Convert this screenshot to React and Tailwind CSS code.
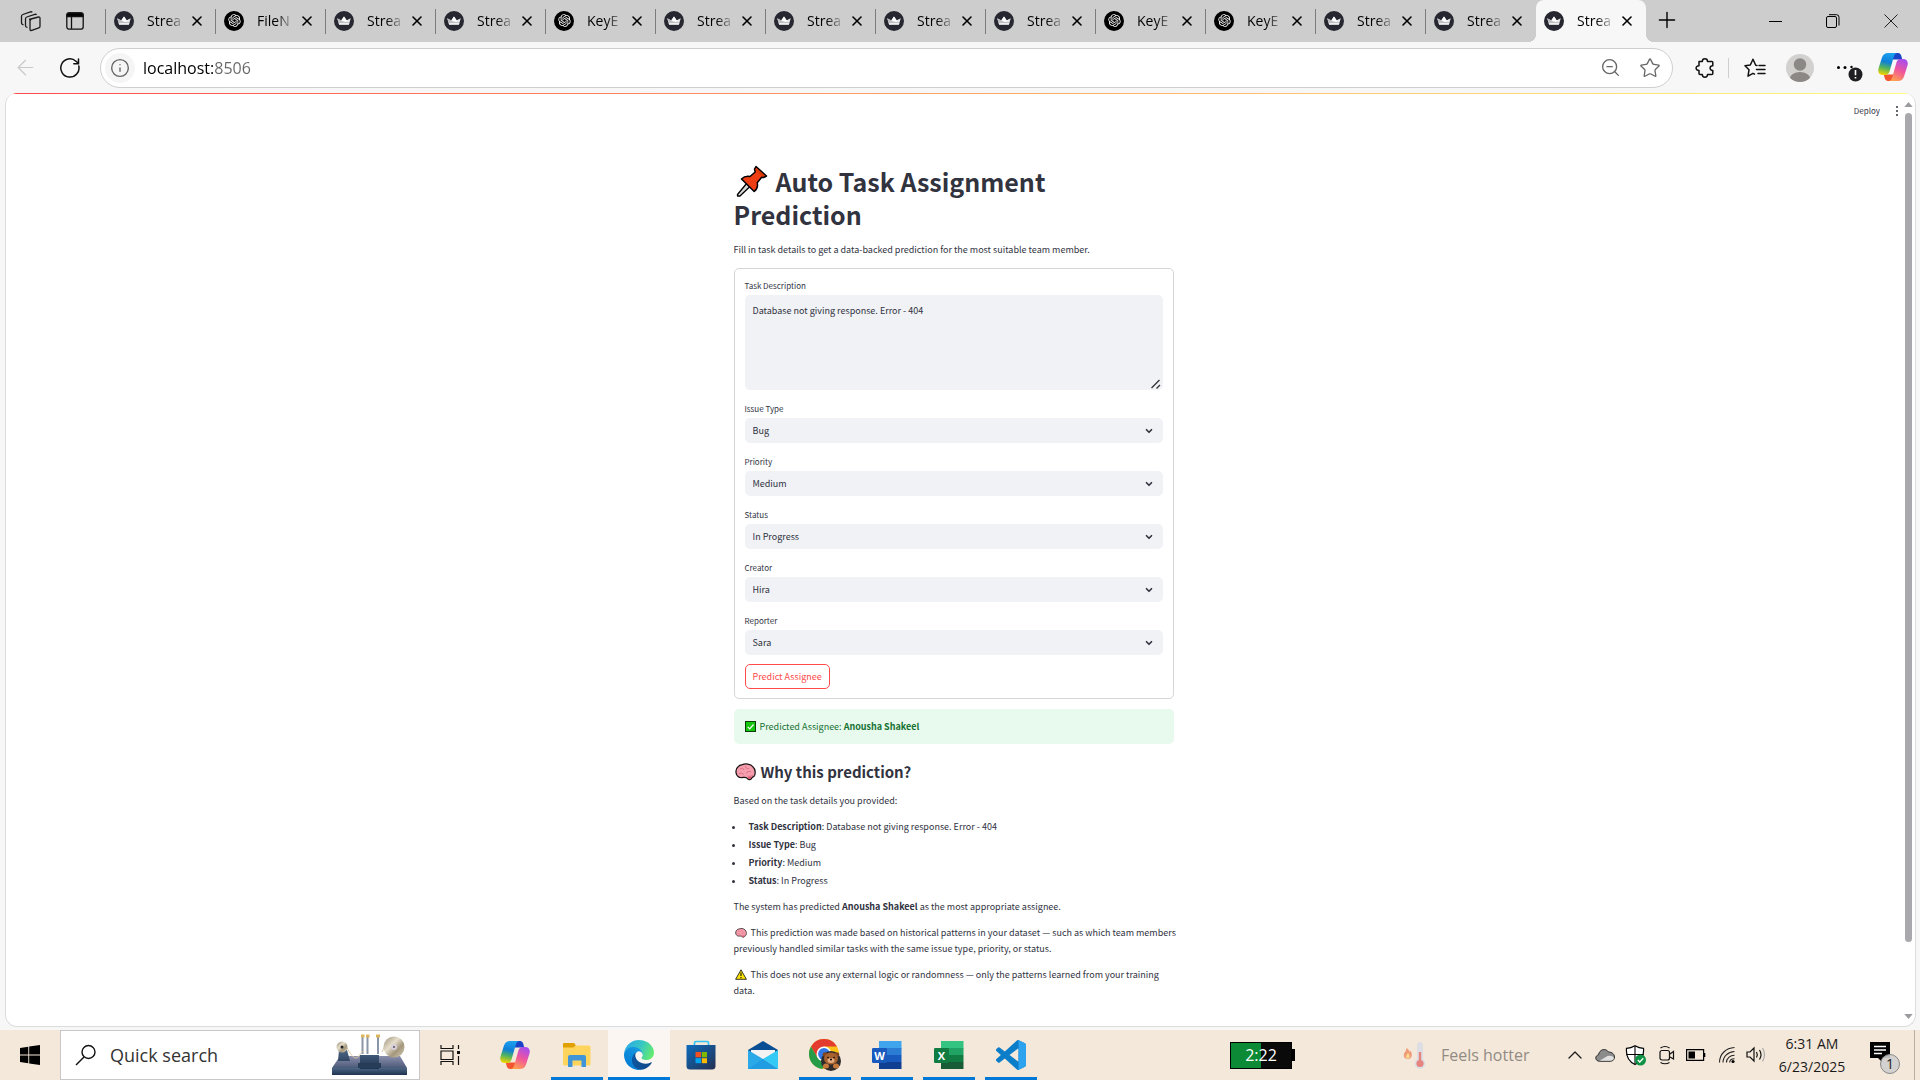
import { useState } from "react";
import { ArrowLeft, Info, X, Plus, ZoomOut, Star, ChevronUp, ChevronDown } from "lucide-react";
import { RiOpenaiFill } from "react-icons/ri";

const TABS = ["s", "o", "s", "s", "o", "s", "s", "s", "s", "o", "o", "s", "s", "s"];
const TAB_TEXT = ["Strea", "FileN", "Strea", "Strea", "KeyE", "Strea", "Strea", "Strea", "Strea", "KeyE", "KeyE", "Strea", "Strea", "Strea"];

function StreamlitIcon() {
  return (
    <svg viewBox="0 0 20 20" className="size-5" aria-hidden="true">
      <circle cx="10" cy="10" r="10" fill="#262730" />
      <path d="M3.2 7.2 7.2 9.5 10 5.6l2.8 3.900 4-2.300-1.900 6.200H5.100z" fill="#e6e6e8" />
      <path d="M10 5.600 7.200 9.500l3.600 2.300 6-4.600-4 2.300z" fill="#fff" />
      <path d="m3.200 7.200 1.900 6.200h9.800l.5-1.800-6-1z" fill="#bdbdc2" />
      <path d="m4.800 12.300.3 1.100h9.800l.3-1.100z" fill="#fff" />
    </svg>
  );
}

function OpenAiIcon() {
  return (
    <span className="flex size-5 items-center justify-center rounded-full bg-black text-white">
      <RiOpenaiFill size={15} />
    </span>
  );
}

function Tab({ kind, title, active }) {
  return (
    <div
      className={
        active
          ? "relative flex h-[42px] w-[110px] shrink-0 items-center rounded-t-lg bg-[#f7f7f7] pl-2"
          : "relative flex h-[42px] w-[110px] shrink-0 items-center pl-2"
      }
    >
      {active ? (
        <>
          <span className="absolute bottom-0 -left-2 size-2 bg-[radial-gradient(circle_at_0_0,#cdcdcd_8px,#f7f7f7_8px)]" />
          <span className="absolute -right-2 bottom-0 size-2 bg-[radial-gradient(circle_at_100%_0,#cdcdcd_8px,#f7f7f7_8px)]" />
        </>
      ) : (
        <span className="absolute top-[9px] -left-px h-[25px] w-px bg-[#7c7c7c]" />
      )}
      <button type="button" className="flex h-10 items-center gap-[13px] pb-px">
        {kind === "s" ? <StreamlitIcon /> : <OpenAiIcon />}
        <span className="w-[38px] text-left text-sm whitespace-nowrap [mask-image:linear-gradient(90deg,#000_50%,transparent)]">
          {title}
        </span>
      </button>
      <button type="button" aria-label="Close tab" className="ml-1 flex size-4 items-center justify-center">
        <X size={16} strokeWidth={1.6} absoluteStrokeWidth className="shrink-0" />
      </button>
    </div>
  );
}

function WorkspacesIcon() {
  return (
    <svg viewBox="0 0 22 22" className="size-[22px]" fill="none" stroke="#1b1b1b" strokeWidth="1.3" strokeLinejoin="round" aria-hidden="true">
      <path d="m9 9.500 9.500-2.500q1.500-.3 1.500 1.200v8q0 1.300-1.200 1.700l-7 2.500q-1.800.5-1.800-1.200V11q0-1.200 1.200-1.700" />
      <path d="M7.500 17.500 6.300 17q-.8-.4-.8-1.500V8.800q0-1.400 1.300-1.800l8-2.700q1.200-.3 1.700.6" />
      <path d="M3.500 15 2.300 14.300q-.8-.4-.8-1.500V6.300q0-1.400 1.300-1.800l7.700-2.700q1.200-.3 1.700.6" />
    </svg>
  );
}

function PaneIcon() {
  return (
    <svg viewBox="0 0 18 18" className="size-[18px]" fill="none" stroke="#111" strokeWidth="1.300" aria-hidden="true">
      <rect x=".8" y=".8" width="16.400" height="16.400" rx="2.500" />
      <path d="M1 4.500V3q0-2 2-2h12q2 0 2 2v1.500z" fill="#000" />
      <path d="M5.500 5v12" />
    </svg>
  );
}

function CopilotIcon() {
  return (
    <svg viewBox="0 0 30 30" className="size-[30px]" aria-hidden="true">
      <defs>
        <linearGradient id="cpA" x1=".5" y1="0" x2=".3" y2="1">
          <stop offset="0" stopColor="#1ba0ee" />
          <stop offset=".4" stopColor="#0f7fd8" />
          <stop offset=".68" stopColor="#52b45c" />
          <stop offset="1" stopColor="#f3d400" />
        </linearGradient>
        <linearGradient id="cpB" x1=".7" y1="0" x2=".3" y2="1">
          <stop offset="0" stopColor="#a64df0" />
          <stop offset=".5" stopColor="#f0569b" />
          <stop offset="1" stopColor="#ffa04f" />
        </linearGradient>
      </defs>
      <path d="M15 1h5c2 0 2.800 1.400 3.300 3l1 3.500H15z" fill="#1a43c8" />
      <path d="M15 29h-5c-2 0-2.800-1.400-3.300-3l-1-3.500H15z" fill="#f2552f" />
      <path d="M10 1h9c-2 .5-2.700 2-3.300 4l-4 14c-.8 2.600-2 4-4.500 4H5c-4 0-5.500-3-4.500-6.500L4 5.500C5 2.500 7 1 10 1z" fill="url(#cpA)" />
      <path d="M20 29h-9c2-.5 2.700-2 3.300-4l4-14c.8-2.600 2-4 4.500-4H25c4 0 5.500 3 4.500 6.500L26 24.500c-1 3-3 4.500-6 4.500z" fill="url(#cpB)" />
    </svg>
  );
}

function PuzzleIcon() {
  return (
    <svg viewBox="0 0 20 20" className="size-5" fill="none" stroke="#111" strokeWidth="1.500" strokeLinejoin="round" aria-hidden="true">
      <path d="M4 3.500h3.300c0-3.600 5.200-3.600 5.200 0h4.300q1 0 1 1v3.200c-3.600-.3-3.600 5 0 4.700v3.200q0 1-1 1h-4.300c0 3.500-5.200 3.500-5.200 0H5q-1 0-1-1v-3.200c-3.900 0-3.900-4.700 0-4.700z" />
    </svg>
  );
}

function FavoritesIcon() {
  return (
    <svg viewBox="0 0 22 20" className="h-5 w-[22px]" fill="none" stroke="#111" strokeWidth="1.500" strokeLinejoin="round" strokeLinecap="round" aria-hidden="true">
      <path d="m13 7.500-1.300-.2L9 1.200 6.300 7 1 7.800l4 4-1 6.400 5-2.900 1.500.8M15 7.500h6M12.500 11.500H21M14 15.500h7" />
    </svg>
  );
}

function BrowserChrome() {
  return (
    <header className="shrink-0">
      <div className="flex h-[42px] items-center bg-[#cdcdcd]">
        <div className="flex w-[106px] shrink-0 items-center gap-6 pl-5">
          <button type="button" aria-label="Workspaces"><WorkspacesIcon /></button>
          <button type="button" aria-label="Tab actions"><PaneIcon /></button>
        </div>
        {TABS.map((kind, i) => (
          <Tab key={i} kind={kind} title={TAB_TEXT[i]} active={i === TABS.length - 1} />
        ))}
        <button type="button" aria-label="New tab" className="ml-2 pb-[3px]">
          <Plus size={26} strokeWidth={1.400} absoluteStrokeWidth />
        </button>
        <div className="ml-auto flex items-center">
          <button type="button" aria-label="Minimize" className="flex w-[58px] justify-center"><span className="h-px w-[13px] bg-black" /></button>
          <button type="button" aria-label="Restore" className="flex w-[58px] justify-center">
            <svg viewBox="0 0 14 14" className="size-[14px]" fill="none" stroke="#000" aria-hidden="true">
              <rect x=".5" y="2.500" width="10" height="11" rx="1.500" />
              <path d="M3 .7h7.500q2.500 0 2.500 2.500V11.500" />
            </svg>
          </button>
          <button type="button" aria-label="Close window" className="flex w-[58px] justify-center">
            <svg viewBox="0 0 14 14" className="size-[14px]" stroke="#222" aria-hidden="true"><path d="m.5.500 13 13m0-13-13 13" /></svg>
          </button>
        </div>
      </div>
      <div className="flex h-[51px] items-center bg-[#f7f7f7] pr-3">
        <div className="flex w-[100px] shrink-0 items-center gap-[22px] pl-[13px]">
          <button type="button" aria-label="Back" className="text-[#c9c9c9]"><ArrowLeft size={25} strokeWidth={1.200} absoluteStrokeWidth /></button>
          <button type="button" aria-label="Refresh">
            <svg viewBox="0 0 20 20" className="size-5" fill="none" stroke="#111" strokeWidth="1.500" strokeLinecap="round" aria-hidden="true">
              <path d="M18.800 8A9.100 9.100 0 1 1 16 3.200L18.500 5.500M18.500 1v4.700h-4.700" />
            </svg>
          </button>
        </div>
        <div className="flex h-10 min-w-0 flex-1 items-center rounded-full border border-[#cfcfcf] bg-white pr-[11px] pl-1">
          <button type="button" aria-label="Site information" className="flex size-[30px] shrink-0 items-center justify-center rounded-full bg-[#f5f5f5] text-[#666]">
            <Info size={20} strokeWidth={1.400} absoluteStrokeWidth />
          </button>
          <input aria-label="Address" defaultValue="localhost:8506" className="ml-2 min-w-0 flex-1 bg-transparent bg-[linear-gradient(90deg,#000_70px,#666_70px)] bg-clip-text text-base text-transparent outline-none" />
          <button type="button" aria-label="Zoom" className="mr-[18px] text-[#666]"><ZoomOut size={21} strokeWidth={1.300} absoluteStrokeWidth /></button>
          <button type="button" aria-label="Add to favorites" className="text-[#666]"><Star size={22} strokeWidth={1.300} absoluteStrokeWidth /></button>
        </div>
        <div className="flex shrink-0 items-center">
          <button type="button" aria-label="Extensions" className="ml-[22px]"><PuzzleIcon /></button>
          <span className="ml-[13px] h-5 w-px bg-[#cfcfcf]" />
          <button type="button" aria-label="Favorites" className="ml-[15px]"><FavoritesIcon /></button>
          <button type="button" aria-label="Profile" className="ml-5">
            <svg viewBox="0 0 28 28" className="size-7" aria-hidden="true">
              <clipPath id="av"><circle cx="14" cy="14" r="14" /></clipPath>
              <g clipPath="url(#av)"><rect width="28" height="28" fill="#d3d1cf" /><circle cx="14" cy="10.500" r="6.200" fill="#8c8885" /><ellipse cx="14" cy="24.500" rx="10.200" ry="6.500" fill="#8c8885" /></g>
            </svg>
          </button>
          <button type="button" aria-label="Settings and more" className="ml-[22px]">
            <svg viewBox="0 0 27 28" className="h-7 w-[27px]" aria-hidden="true">
              <circle cx="2.500" cy="13.500" r="1.500" /><circle cx="9" cy="13.500" r="1.500" /><circle cx="15.500" cy="13" r="1.200" />
              <circle cx="19.500" cy="20.500" r="7" fill="#1f1f23" /><path d="M19.500 16v5.200M19.500 23v1.600" stroke="#fff" strokeWidth="1.600" />
            </svg>
          </button>
          <button type="button" aria-label="Copilot" className="ml-[15px] pb-px"><CopilotIcon /></button>
        </div>
      </div>
    </header>
  );
}

function PinEmoji() {
  return (
    <svg viewBox="0 0 32 32" className="h-8 w-8" aria-hidden="true">
      <path d="m11 18-9.500 11.500V31H4l10-9.500z" fill="#d8d8d8" stroke="#000" strokeWidth="1.300" strokeLinejoin="round" />
      <path d="M20 1.500 30.500 11l-2.800 1.500-2-.3-4.500 5.500c.8 3.500-.2 6.800-3 8.800L5.500 14c2.500-2.500 5.500-3 8.500-2.500L19.200 7l-.7-2.800z" fill="#ef3e14" stroke="#000" strokeWidth="1.500" strokeLinejoin="round" />
      <path d="m20.800 3.500 8 7.300-3 .2-6-5.500z" fill="#dc3a00" />
    </svg>
  );
}

function BrainEmoji({ className }) {
  return (
    <svg viewBox="0 0 20 17" className={className} aria-hidden="true">
      <path d="M7 1.500C9.500.2 15 .5 17 3.500c2.300 2 2.500 5.500 1.800 8-.6 1.800-2 1.800-2.600 2.300-.5 1.700-2.500 2.600-4 1.400-.7-1.300-2.200-1.700-4.200-1.500C5 14.200 2.500 13 1.500 10.800.5 8 1 5 3 3.500 4 2 5.500 1.700 7 1.500z" fill="#f59fae" stroke="#1b1213" strokeWidth="1.200" />
      <path d="M12.500 12.500c1.500.5 3.500 0 4.500-1M5 5.500c1.500-1 3-.6 3.500.8M10 3c0 2 1.500 2.500 3 2.200M4 10c1.500-.8 3-.3 4 .6M11 9.500c.5-1.700 2.500-2 4-1.200" fill="none" stroke="#d9697f" strokeWidth=".9" strokeLinecap="round" />
      <path d="M12.500 14.500c1.500.6 2.600.2 3.200-1.200l-3 .2z" fill="#e63950" />
    </svg>
  );
}

function Field({ id, label, options }) {
  return (
    <div className="mt-[13px]">
      <label htmlFor={id} className="block h-[15px] text-[8px] leading-[12px]">{label}</label>
      <div className="relative">
        <select id={id} className="block h-[25px] w-full appearance-none rounded-[5px] bg-[#f0f2f6] px-2 text-[9px] leading-4 outline-none">
          {options.map((o) => <option key={o}>{o}</option>)}
        </select>
        <ChevronDown size={10} strokeWidth={4} className="pointer-events-none absolute top-2 right-[9px]" />
      </div>
    </div>
  );
}

const DETAILS = [
  ["Task Description", "Database not giving response. Error - 404"],
  ["Issue Type", "Bug"],
  ["Priority", "Medium"],
  ["Status", "In Progress"],
];

function Page() {
  const [text, setText] = useState("Database not giving response. Error - 404");
  return (
    <div className="mr-1 ml-[5px] flex min-h-0 flex-1 overflow-hidden rounded-xl border border-t-0 border-[#dcdcdc] bg-white font-['Noto_Sans_CJK_SC','Source_Sans_Pro',sans-serif] text-[9px] leading-4 text-[#31333f]">
      <div className="relative flex min-w-0 flex-1 flex-col items-center">
        <div className="absolute top-0 left-0 h-px w-[calc(100%+12px)] bg-[linear-gradient(90deg,#ff4b4b,#fffd80)]" />
        <div className="absolute top-[10px] right-0 flex items-center gap-[13px]">
          <button type="button" className="text-[8px] leading-4">Deploy</button>
          <button type="button" aria-label="Main menu" className="flex w-2 flex-col items-center gap-[2px]">
            <span className="size-[2px] rounded-full bg-[#31333f]" /><span className="size-[2px] rounded-full bg-[#31333f]" /><span className="size-[2px] rounded-full bg-[#31333f]" />
          </button>
        </div>
        <main className="w-full max-w-[440px] pt-[72px]">
          <h1 className="text-[25px] leading-[33px] font-bold">
            <span className="mr-2 inline-block pl-[2px] align-[-5px] leading-none"><PinEmoji /></span>
            Auto Task Assignment Prediction
          </h1>
          <p className="mt-[11px]">Fill in task details to get a data-backed prediction for the most suitable team member.</p>

          <form className="mt-[10px] rounded-[5px] border border-[#d6d6d9] px-[10px] pt-[11px] pb-[9px]" onSubmit={(e) => e.preventDefault()}>
            <label htmlFor="desc" className="block h-[15px] text-[8px] leading-[12px]">Task Description</label>
            <div className="relative">
              <textarea id="desc" value={text} onChange={(e) => setText(e.target.value)} className="block h-[95px] w-full resize-none rounded-[5px] bg-[#f0f2f6] px-2 py-2 text-[9px] leading-4 outline-none" />
              <svg viewBox="0 0 10 10" className="pointer-events-none absolute right-[2px] bottom-px size-[10px]" stroke="#333" strokeWidth="1.300" aria-hidden="true"><path d="M.5 9 8.500 1M5.500 9.500l3.500-3.500" /></svg>
            </div>
            <Field id="issue" label="Issue Type" options={["Bug", "Task", "Story"]} />
            <Field id="priority" label="Priority" options={["Medium", "High", "Low"]} />
            <Field id="status" label="Status" options={["In Progress", "To Do", "Done"]} />
            <Field id="creator" label="Creator" options={["Hira", "Sara"]} />
            <Field id="reporter" label="Reporter" options={["Sara", "Hira"]} />
            <button type="submit" className="mt-[9px] block h-[25px] rounded-[5px] border border-[#ff4b4b] px-[7px] text-[9px] text-[#ff4b4b]">Predict Assignee</button>
          </form>

          <div role="status" className="mt-[10px] flex h-[35px] items-center rounded-[5px] bg-[#e8f9ee] pl-[11px] text-[#177233]">
            <svg viewBox="0 0 11 11" className="mr-1 size-[11px]" aria-hidden="true"><rect x=".5" y=".5" width="10" height="10" fill="#16c60c" stroke="#0b3d08" /><path d="m2.700 5.800 2 2 3.800-4.300" fill="none" stroke="#fff" strokeWidth="1.200" /></svg>
            <p>Predicted Assignee: <strong>Anousha Shakeel</strong></p>
          </div>

          <h3 className="mt-[17px] flex h-[22px] items-center text-[15px] leading-[22px] font-semibold">
            <BrainEmoji className="mr-[5px] ml-px h-[18px] w-[21px]" />
            Why this prediction?
          </h3>
          <p className="mt-[10px]">Based on the task details you provided:</p>
          <ul className="mt-[10px] flex flex-col gap-[2px]">
            {DETAILS.map(([k, v]) => (
              <li key={k} className="-ml-[2px] flex items-center"><span className="mr-[14px] size-[3px] rounded-full bg-[#31333f]" /><span><strong>{k}</strong>: {v}</span></li>
            ))}
          </ul>
          <p className="mt-[10px]">The system has predicted <strong>Anousha Shakeel</strong> as the most appropriate assignee.</p>
          <p className="-mr-2 mt-[10px]">
            <BrainEmoji className="mr-[2px] ml-px inline-block h-[10px] w-[12px] align-[-2px]" />
            {" "}This prediction was made based on historical patterns in your dataset — such as which team members previously handled similar tasks with the same issue type, priority, or status.
          </p>
          <p className="mt-[10px]">
            <svg viewBox="0 0 12 11" className="mr-[2px] ml-px inline-block h-[11px] w-[12px] align-[-2px]" aria-hidden="true"><path d="M6 .8 11.400 10.300H.6z" fill="#fde300" stroke="#222" strokeWidth=".9" strokeLinejoin="round" /><path d="M6 3.500v3.500M6 8v1.200" stroke="#111" strokeWidth="1.100" /></svg>
            {" "}This does not use any external logic or randomness — only the patterns learned from your training data.
          </p>
        </main>
      </div>
      <div className="flex w-[14px] shrink-0 flex-col items-center pt-[9px] pb-[7px]">
        <svg viewBox="0 0 10 6" className="h-[5px] w-[9px] shrink-0" aria-hidden="true"><path d="M5 0 10 6H0z" fill="#9b9b9f" /></svg>
        <div className="mt-[6px] flex w-[7px] flex-1 flex-col"><div className="h-[92%] rounded-full bg-[#a9a9ad]" /></div>
        <svg viewBox="0 0 10 6" className="h-[5px] w-[9px] shrink-0" aria-hidden="true"><path d="M5 6 0 0h10z" fill="#9b9b9f" /></svg>
      </div>
    </div>
  );
}

function SearchArt() {
  return (
    <svg viewBox="0 0 75 42" className="h-[42px] w-[75px]" aria-hidden="true">
      <defs>
        <linearGradient id="base" x1="0" y1="0" x2="0" y2="1"><stop offset="0" stopColor="#8c90ad" /><stop offset="1" stopColor="#4a5a78" /></linearGradient>
        <linearGradient id="dark" x1="0" y1="0" x2="0" y2="1"><stop offset="0" stopColor="#4b6583" /><stop offset="1" stopColor="#1f3450" /></linearGradient>
        <linearGradient id="reel" x1="0" y1="0" x2="1" y2="1"><stop offset="0" stopColor="#9b8f78" /><stop offset=".4" stopColor="#e6dfcc" /><stop offset=".65" stopColor="#a3967c" /><stop offset="1" stopColor="#d8cfb8" /></linearGradient>
      </defs>
      <path d="M8 22h60l7 12H0z" fill="url(#base)" />
      <path d="M0 34h75v7H0z" fill="url(#dark)" />
      <path d="M7 16h8l3 11H6zM28 21h19v14H28z" fill="url(#dark)" />
      <path d="M26 29h23v5H26z" fill="#263c58" />
      <path d="M30.500 3v17M35.500 3v17M46 3v17" stroke="#8b95a8" strokeWidth="2" />
      <path d="M29 2h3.500M34 2h3.500M44 2h4" stroke="#dcb65c" strokeWidth="3" />
      <path d="M13 10c4 7 7 14 11 14 3 0 4-6 8-7M50 18l4-9" fill="none" stroke="#d8c9a2" />
      <circle cx="10" cy="13" r="5.500" fill="url(#reel)" /><circle cx="10" cy="13" r="1.500" fill="#222" />
      <circle cx="62" cy="13" r="10.500" fill="url(#reel)" /><circle cx="62" cy="13" r="3" fill="#d9cfdc" /><circle cx="62" cy="13" r="1" fill="#555" />
    </svg>
  );
}

function FolderIcon() {
  return (
    <svg viewBox="0 0 28 24" className="h-6 w-7" aria-hidden="true">
      <path d="M1 0h9.500q1 0 1.500 1l1 2v3H0V1q0-1 1-1z" fill="#e0a000" />
      <path d="M0 4.500h10.500l2-2H26q1.500 0 1.500 1.500v17q0 1.500-1.500 1.500H1.500Q0 22.500 0 21z" fill="#ffd45c" />
      <path d="M5 24V14q0-2 2-2h14q2 0 2 2v10h-4.500v-6.500h-9V24z" fill="#3f95d8" />
    </svg>
  );
}

function EdgeIcon() {
  return (
    <svg viewBox="0 0 256 256" className="size-[30px]" aria-hidden="true">
      <defs>
        <linearGradient id="ea" x1="0" y1="0" x2="1" y2=".3"><stop offset="0" stopColor="#0c59a4" /><stop offset="1" stopColor="#114a8b" /></linearGradient>
        <linearGradient id="eb" x1=".8" y1="0" x2=".2" y2="1"><stop offset="0" stopColor="#1b9de2" /><stop offset="1" stopColor="#0078d4" /></linearGradient>
        <linearGradient id="ec" x1="0" y1=".3" x2="1" y2=".6"><stop offset="0" stopColor="#2aa9e6" /><stop offset=".5" stopColor="#36c6c6" /><stop offset="1" stopColor="#66eb6e" /></linearGradient>
      </defs>
      <g transform="translate(-4.630 -4.920)">
        <path fill="url(#ea)" d="M235.680 195.490a93.730 93.730 0 0 1-10.540 4.710 101.870 101.870 0 0 1-35.900 6.460c-47.320 0-88.540-32.550-88.540-74.320A31.480 31.480 0 0 1 117.130 105c-42.800 1.800-53.800 46.400-53.800 72.530 0 73.880 68.090 81.370 82.760 81.370 7.910 0 19.840-2.300 27-4.560l1.310-.44a128.340 128.340 0 0 0 66.600-52.800 4 4 0 0 0-5.320-5.610z" />
        <path fill="url(#eb)" d="M110.340 246.340A79.200 79.200 0 0 1 87.600 225a80.720 80.720 0 0 1 29.530-120c3.120-1.470 8.450-4.130 15.540-4a32.350 32.350 0 0 1 25.690 13 31.880 31.880 0 0 1 6.360 18.660c0-.21 24.460-79.600-80-79.600-43.900 0-80 41.660-80 78.210a130.150 130.150 0 0 0 12.110 56 128 128 0 0 0 156.380 67.110 75.550 75.550 0 0 1-62.780-8z" />
        <path fill="url(#ec)" d="M156.940 153.780c-.81 1.050-3.300 2.500-3.300 5.660 0 2.610 1.700 5.120 4.720 7.230 14.380 10 41.490 8.680 41.560 8.680a59.560 59.560 0 0 0 30.270-8.350 61.380 61.380 0 0 0 30.430-52.880c.26-22.410-8-37.310-11.340-43.910C228.090 28.760 182.350 4.920 132.610 4.920a128 128 0 0 0-128 126.200c.48-36.540 36.800-66.050 80-66.050 3.500 0 23.460.34 42 10.070 16.340 8.580 24.900 18.940 30.850 29.210 6.180 10.670 7.280 24.150 7.280 29.520s-2.740 13.330-7.800 19.910z" />
      </g>
    </svg>
  );
}

function StoreIcon() {
  return (
    <svg viewBox="0 0 30 30" className="size-[30px]" aria-hidden="true">
      <defs><linearGradient id="st" x1="0" y1="0" x2="1" y2="1"><stop offset="0" stopColor="#0d6cbd" /><stop offset="1" stopColor="#242f52" /></linearGradient></defs>
      <path d="M8.500 7V3q0-1.500 1.500-1.500h11q1.500 0 1.500 1.500v4" fill="none" stroke="#35c3f3" strokeWidth="1.700" />
      <path d="M.5 5h29v21q0 3.500-3.500 3.500H4Q.5 29.500.5 26z" fill="url(#st)" />
      <path d="M9.500 12H15v5.300H9.500z" fill="#f25022" /><path d="M15.800 12h5.200v5.300h-5.200z" fill="#7fba00" /><path d="M9.500 18.200H15v5H9.500z" fill="#00a4ef" /><path d="M15.800 18.200h5.200v5h-5.200z" fill="#ffb900" />
    </svg>
  );
}

function MailIcon() {
  return (
    <svg viewBox="0 0 30 28" className="h-7 w-[30px]" aria-hidden="true">
      <path d="M0 9 15 0l15 9v3H0z" fill="#0a4f94" /><path d="M3 9h24v10H3z" fill="#f3f3f3" />
      <path d="M0 9v19h30L15 18z" fill="#29a9e8" /><path d="M30 9v19L15 18z" fill="#35c9f5" /><path d="M0 28h30L15 18z" fill="#1f9ce2" />
    </svg>
  );
}

function ChromeIcon() {
  return (
    <svg viewBox="0 0 32 32" className="size-8" aria-hidden="true">
      <circle cx="15" cy="15" r="15" fill="#fbc116" />
      <path d="M2 7.500a15 15 0 0 1 26 0H15L8.500 18.700z" fill="#e33b2e" />
      <path d="M2 7.500 8.500 18.700l6.500 3.800L13.500 30A15 15 0 0 1 2 7.500z" fill="#269b48" />
      <circle cx="15" cy="15" r="7.500" fill="#fff" /><circle cx="15" cy="15" r="5.900" fill="#3177e6" />
      <circle cx="22" cy="22" r="10" fill="#2e2b2c" />
      <circle cx="16" cy="15.500" r="2.300" fill="#82431f" /><circle cx="28" cy="15.500" r="2.300" fill="#82431f" />
      <ellipse cx="22" cy="19.500" rx="7" ry="6" fill="#a7602f" /><ellipse cx="22" cy="21.500" rx="3.500" ry="2.500" fill="#e6ad80" />
      <ellipse cx="17" cy="27" rx="3" ry="2.500" fill="#c8793c" /><ellipse cx="27" cy="27" rx="3" ry="2.500" fill="#c8793c" />
      <circle cx="19" cy="18.500" r=".8" /><circle cx="25" cy="18.500" r=".8" /><circle cx="22" cy="20.500" r="1" />
    </svg>
  );
}

function OfficeIcon({ letter, c }) {
  return (
    <svg viewBox="0 0 30 28" className="h-7 w-[30px]" aria-hidden="true">
      <rect x="7" y="0" width="22.500" height="7.500" fill={c[0]} /><rect x="7" y="7" width="22.500" height="7" fill={c[1]} /><rect x="7" y="14" width="22.500" height="7" fill={c[2]} /><rect x="7" y="21" width="22.500" height="7" fill={c[3]} />
      <rect x="0" y="7" width="15" height="15" rx="1.200" fill={c[4]} />
      <text x="7.500" y="18.500" textAnchor="middle" fontSize="11" fontWeight="700" fontFamily="Open Sans, sans-serif" fill="#fff">{letter}</text>
    </svg>
  );
}

function VsCodeIcon() {
  return (
    <svg viewBox="0 0 24 24" className="size-[30px]" aria-hidden="true">
      <path fill="#0b7dc9" d="M23.150 2.587L18.210.21a1.494 1.494 0 0 0-1.705.29l-9.460 8.630-4.120-3.128a.999.999 0 0 0-1.276.057L.327 7.261A1 1 0 0 0 .326 8.740L3.899 12 .326 15.260a1 1 0 0 0 .001 1.479L1.650 17.940a.999.999 0 0 0 1.276.057l4.120-3.128 9.460 8.630a1.492 1.492 0 0 0 1.704.29l4.942-2.377A1.500 1.500 0 0 0 24 20.060V3.939a1.500 1.500 0 0 0-.85-1.352zm-5.146 14.861L10.826 12l7.178-5.448v10.896z" />
      <path fill="#2da2ee" d="M18 .2 23.150 2.587A1.500 1.500 0 0 1 24 3.939V20.060a1.500 1.500 0 0 1-.85 1.352L18 23.800z" />
    </svg>
  );
}

const APPS = [
  { name: "Copilot", icon: <CopilotIcon /> },
  { name: "File Explorer", icon: <FolderIcon />, open: true },
  { name: "Edge", icon: <EdgeIcon />, active: true },
  { name: "Microsoft Store", icon: <StoreIcon /> },
  { name: "Mail", icon: <MailIcon /> },
  { name: "Chrome", icon: <ChromeIcon />, open: true },
  { name: "Word", icon: <OfficeIcon letter="W" c={["#41a5ee", "#2b7cd3", "#185abd", "#103f91", "#185abd"]} />, open: true },
  { name: "Excel", icon: <OfficeIcon letter="X" c={["#33c481", "#21a366", "#107c41", "#185c37", "#107c41"]} />, open: true },
  { name: "Visual Studio Code", icon: <VsCodeIcon />, open: true },
];

function Tray() {
  return (
    <div className="flex items-center gap-[10px]">
      <button type="button" aria-label="Show hidden icons"><ChevronUp size={24} strokeWidth={1.300} absoluteStrokeWidth className="-mx-[2px]" /></button>
      <svg viewBox="0 0 20 14" className="h-[14px] w-5" aria-hidden="true"><path d="M4.500 13.300C-.3 13-.3 7.500 3.500 6.800 4.300 1.500 10.500-.5 13.500 4c4 0 6 2.500 6 5 0 3-2 4.300-4.500 4.300z" fill="#8b8b8b" stroke="#222" strokeWidth=".9" /><path d="m4.500 12.800 8-4.800q5-1 6.500 2-.5 2.800-4 2.800z" fill="#e0e0e0" /></svg>
      <svg viewBox="0 0 21 21" className="size-[21px]" aria-hidden="true"><path d="M10 .8q4 2.500 8.500 2.500 1 11.700-8.500 16.200Q.5 15 1.500 3.300 6 3.300 10 .8z" fill="#fff" stroke="#000" strokeWidth="1.200" /><path d="M10 1v18M1.500 9.500h17" stroke="#000" strokeWidth="1.100" /><circle cx="15.500" cy="15" r="5.500" fill="#109245" /><path d="m12.800 15 2 2 3.500-3.800" fill="none" stroke="#fff" strokeWidth="1.300" /></svg>
      <svg viewBox="0 0 18 20" className="mx-px h-5 w-[18px]" fill="none" stroke="#111" strokeWidth="1.200" aria-hidden="true"><path d="M3.500 3q4.500-3 9 0M3.500 17.500q4.500 2.500 9 0" /><rect x="3" y="5.500" width="9.500" height="9.500" rx="2" /><path d="m13 9 3.500-2.500v7.500L13 12" /></svg>
      <svg viewBox="0 0 20 12" className="h-3 w-5" fill="none" stroke="#000" strokeWidth="1.200" aria-hidden="true"><path d="M.6.600h17v10.800H.6zM18.700 4v4" /><path d="M2.500 2.500H9v7H2.500z" fill="#000" stroke="none" /></svg>
      <svg viewBox="0 0 18 18" className="ml-[2px] size-[18px]" fill="none" stroke="#222" strokeWidth="1.100" aria-hidden="true"><path d="M1.500 16.500C1.500 8 8 2 16.500 1.500M5 16.500C5 10.500 10 5.800 16.500 5.500M8.500 16.500c0-4 3.500-7.200 8-7.200M11.700 16.500c0-2.200 2-3.800 4.800-3.800" /><circle cx="15" cy="15.500" r="1.600" fill="#000" stroke="none" /></svg>
      <svg viewBox="0 0 20 18" className="h-[18px] w-5" fill="none" stroke="#111" strokeWidth="1.200" aria-hidden="true"><path d="M1 6h3l4-4v13l-4-4H1zM10.500 6q1.500 2.700 0 5.500M13.500 4q3 4.500 0 9.500" /><path d="M16.500 2q4 6.500 0 13.500" stroke="#aaa" /></svg>
    </div>
  );
}

function Taskbar() {
  return (
    <footer className="flex h-[50px] shrink-0 items-center bg-[#f4e8da] text-[#1b1b1b]">
      <button type="button" aria-label="Start" className="flex w-[60px] shrink-0 justify-center">
        <svg viewBox="0 0 20 20" className="size-5" aria-hidden="true"><path d="M0 3 8.300 1.700v7.800H0zM9.200 1.600 20 0v9.500H9.200zM0 10.400h8.300v7.900L0 17zM9.200 10.400H20V20L9.200 18.400z" /></svg>
      </button>
      <label className="flex h-[50px] w-[360px] shrink-0 items-center border border-[#c8c8c8] bg-white pr-3 pl-[14px]">
        <svg viewBox="0 0 22 22" className="size-[22px] shrink-0" fill="none" stroke="#111" strokeWidth="1.400" aria-hidden="true"><circle cx="13.500" cy="8" r="6.500" /><path d="m9 13-8 8" /></svg>
        <input aria-label="Quick search" placeholder="Quick search" className="ml-[13px] min-w-0 flex-1 bg-transparent text-[18px] outline-none placeholder:text-[#333]" />
        <SearchArt />
      </label>
      <button type="button" aria-label="Task view" className="flex w-16 shrink-0 justify-center pr-1">
        <svg viewBox="0 0 21 20" className="h-5 w-[21px]" fill="none" stroke="#111" strokeWidth="1.200" aria-hidden="true"><path d="M1 0v3.500h12V0M1 6h12v8.500H1zM1 20v-3.500h12V20M18.500 0v4M18.500 11v9" /><path d="M17 6h3v3h-3z" fill="#111" stroke="none" /></svg>
      </button>
      {APPS.map((a) => (
        <button
          key={a.name}
          type="button"
          aria-label={a.name}
          className={a.active ? "relative flex h-full w-[62px] shrink-0 items-center justify-center bg-[#fbf6f2]" : "relative flex h-full w-[62px] shrink-0 items-center justify-center"}
        >
          {a.icon}
          {a.active && <span className="absolute inset-x-0 bottom-0 h-[3px] bg-[#0078d7]" />}
          {a.open && <span className="absolute inset-x-[5px] bottom-0 h-[3px] bg-[#0078d7]" />}
        </button>
      ))}
      <div className="ml-auto flex h-full items-center">
        <div className="flex items-center">
          <div className="flex h-[27px] w-[62px] items-center justify-center border border-black bg-[linear-gradient(90deg,#0c8a35_50%,#0a0a0a_50%)] text-base text-white">2:22</div>
          <span className="h-3 w-[3px] bg-black" />
        </div>
        <svg viewBox="0 0 24 28" className="ml-[108px] h-7 w-6 opacity-60" aria-hidden="true">
          <path d="M5 18C1 18-.5 14 2 11c.8-1 1.500-2.500 1.200-4C6 8.500 6.500 10 6.500 11l1-1.200C10 13 9 18 5 18z" fill="#ee6a34" /><path d="M5 17.500c-2 0-2.500-2-1-4l1-1.500c2 2 2.500 5.500 0 5.500z" fill="#ffd25a" />
          <rect x="14" y="1" width="6" height="21" rx="3" fill="#cdd8ea" /><circle cx="17" cy="22.500" r="5.300" fill="#cdd8ea" /><circle cx="17" cy="22.500" r="3.600" fill="#dd4444" /><path d="M17 11v11" stroke="#dd4444" strokeWidth="2.400" />
        </svg>
        <span className="ml-[14px] w-[96px] text-base whitespace-nowrap text-[#918b84]">Feels hotter</span>
        <div className="ml-[28px]"><Tray /></div>
        <div className="ml-2 w-[76px] text-center text-sm leading-[23px]"><div>6:31 AM</div><div>6/23/2025</div></div>
        <button type="button" aria-label="Notifications, 1 new" className="relative ml-5 h-[34px] w-[32px]">
          <svg viewBox="0 0 20 20" className="absolute top-1 left-0 size-5" aria-hidden="true"><path d="M0 0h20v16h-8v4l-4-4H0z" /><path d="M4 4.500h12M4 8h12M4 11.500h8" stroke="#fff" strokeWidth="1.300" /></svg>
          <span className="absolute top-4 left-[10px] flex size-5 items-center justify-center rounded-full border border-[#888] bg-[#cfcfcf]/90 text-sm">1</span>
        </button>
        <span className="ml-[12px] h-full w-px bg-[#b9b0a5]" />
        <span className="w-[5px]" />
      </div>
    </footer>
  );
}

export default function App() {
  return (
    <div className="flex h-screen flex-col overflow-hidden bg-[#f7f7f7] font-['Open_Sans','Noto_Sans',sans-serif] text-black">
      <BrowserChrome />
      <Page />
      <div className="h-[3px] shrink-0" />
      <Taskbar />
    </div>
  );
}
